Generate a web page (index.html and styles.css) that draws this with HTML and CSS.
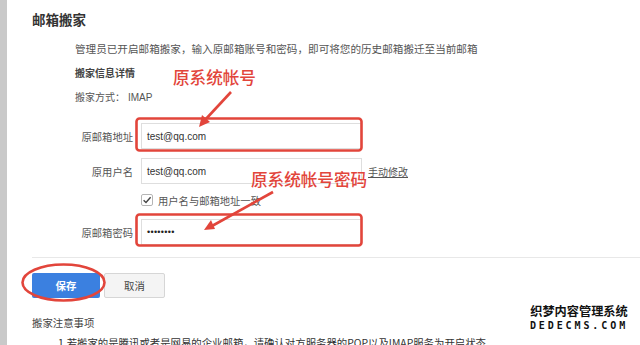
FILE: index.html
```html
<!DOCTYPE html>
<html lang="zh-CN">
<head>
<meta charset="utf-8">
<title>邮箱搬家</title>
<link rel="stylesheet" href="styles.css">
</head>
<body>
<div class="page">
  <div class="rail"></div>
  <main class="main">
    <h2 class="title">邮箱搬家</h2>
    <div class="intro">
      <p class="desc">管理员已开启邮箱搬家，输入原邮箱账号和密码，即可将您的历史邮箱搬迁至当前邮箱</p>
      <p class="sub">搬家信息详情</p>
      <p class="mode">搬家方式：<span class="mode-val">IMAP</span></p>
    </div>
    <form class="form">
      <div class="row row-addr">
        <label class="label">原邮箱地址</label>
        <div class="input">test@qq.com</div>
      </div>
      <div class="row row-user">
        <label class="label">原用户名</label>
        <div class="input">test@qq.com</div>
        <a class="link">手动修改</a>
      </div>
      <div class="row row-check">
        <span class="checkbox"><svg width="12" height="12" viewBox="0 0 12 12"><rect x="0.5" y="0.5" width="11" height="11" rx="1.5" fill="#fff" stroke="#b5b5b5"/><path d="M2.6 6.2 L5 8.5 L9.6 3.2" fill="none" stroke="#444" stroke-width="1.4"/></svg></span>
        <span class="check-text">用户名与邮箱地址一致</span>
      </div>
      <div class="row row-pass">
        <label class="label">原邮箱密码</label>
        <div class="input input-pass">••••••••</div>
      </div>
    </form>
    <div class="divider"></div>
    <div class="actions">
      <button class="btn btn-primary" type="button">保存</button>
      <button class="btn btn-default" type="button">取消</button>
    </div>
    <p class="notes-title">搬家注意事项</p>
    <p class="notes-item">1.若搬家的是腾讯或者是网易的企业邮箱，请确认对方服务器的POP以及IMAP服务为开启状态</p>
  </main>

  <svg class="marks" width="640" height="345" viewBox="0 0 640 345">
    <g fill="none" stroke="#e2453b" stroke-width="2.6">
      <rect x="136.5" y="118.5" width="225" height="32" rx="3"/>
      <rect x="136.5" y="214.5" width="225" height="31" rx="3"/>
      <ellipse cx="63.5" cy="282.5" rx="41" ry="18"/>
      <line x1="231" y1="92" x2="205" y2="120"/>
      <line x1="273" y1="192" x2="212" y2="226"/>
    </g>
    <g fill="#e2453b">
      <polygon points="199,127 202,115 210,122"/>
      <polygon points="204,230 211,220 215,229"/>
    </g>
  </svg>
  <div class="note note-1">原系统帐号</div>
  <div class="note note-2">原系统帐号密码</div>
  <div class="watermark">
    <div class="wm-cn">织梦内容管理系统</div>
    <div class="wm-en">DEDECMS.COM</div>
  </div>
</div>
</body>
</html>
```

FILE: styles.css
```css
html, body {
  margin: 0;
  padding: 0;
  background: #fff;
}
.page {
  position: relative;
  width: 640px;
  height: 345px;
  overflow: hidden;
  display: flex;
  font-family: "Noto Sans CJK SC", "Noto Sans", sans-serif;
  color: #444;
  font-size: 10.4px;
}
.rail {
  width: 7px;
  flex: none;
  background: #c9c9c9;
}
.main {
  flex: 1;
  padding: 10px 0 0 25px;
}
p { margin: 0; }
.title {
  margin: 0;
  font-size: 13.5px;
  line-height: 18px;
  font-weight: 700;
  color: #333;
}
.intro {
  padding-left: 43px;
}
.desc {
  margin-top: 13px;
  line-height: 16px;
  font-size: 10.6px;
  color: #555;
}
.sub {
  margin-top: 8px;
  line-height: 16px;
  font-size: 10px;
  font-weight: 700;
  color: #444;
}
.mode {
  margin-top: 8px;
  line-height: 16px;
  font-size: 10px;
  color: #555;
}
.mode-val {
  margin-left: 3px;
  font-family: "Liberation Sans", sans-serif;
  font-size: 10px;
}
.form {
  margin-top: 17px;
}
.row {
  display: flex;
  align-items: center;
}
.label {
  width: 101px;
  margin-right: 8px;
  text-align: right;
  color: #555;
  font-size: 10.3px;
}
.input {
  width: 221px;
  height: 26px;
  box-sizing: border-box;
  border: 1px solid #dedede;
  padding-left: 5px;
  display: flex;
  align-items: center;
  font-family: "Liberation Sans", sans-serif;
  font-size: 10px;
  color: #333;
}
.input-pass {
  font-size: 9px;
  letter-spacing: 0.3px;
  color: #222;
}
.row-user { margin-top: 9px; }
.row-check {
  margin-top: 8px;
  height: 16px;
  padding-left: 109px;
}
.row-pass { margin-top: 11px; }
.link {
  margin-left: 6px;
  text-decoration: underline;
  color: #555;
  font-size: 10px;
}
.checkbox {
  display: flex;
  width: 12px;
  height: 12px;
}
.check-text {
  margin-left: 5px;
  color: #555;
  font-size: 10.3px;
}
.divider {
  margin-top: 12px;
  height: 1px;
  background: #e8e8e8;
}
.actions {
  margin-top: 15px;
  display: flex;
  gap: 4px;
}
.btn {
  height: 25px;
  border-radius: 2px;
  font-family: "Noto Sans CJK SC", sans-serif;
  font-size: 10.4px;
  padding: 0;
}
.btn-primary {
  width: 68px;
  border: none;
  background: #3b80e0;
  color: #fff;
  font-weight: 700;
}
.btn-default {
  width: 61px;
  border: 1px solid #d6d6d6;
  background: #f4f4f4;
  color: #444;
}
.notes-title {
  margin-top: 17px;
  line-height: 16px;
  font-size: 10.4px;
  color: #444;
}
.notes-item {
  margin-top: 4px;
  padding-left: 26px;
  line-height: 16px;
  font-size: 10.4px;
  color: #333;
}
.marks {
  position: absolute;
  left: 0;
  top: 0;
  pointer-events: none;
}
.note {
  position: absolute;
  color: #e2453b;
  font-size: 16.6px;
  line-height: 20px;
  font-weight: 500;
  white-space: nowrap;
}
.note-1 { left: 173px; top: 67px; }
.note-2 { left: 251px; top: 169px; }
.watermark {
  position: absolute;
  left: 529px;
  top: 303px;
  width: 100px;
  text-align: center;
}
.wm-cn {
  font-size: 12.2px;
  line-height: 16px;
  font-weight: 700;
  color: #111;
  text-shadow: 1px 0 #fff, -1px 0 #fff, 0 1px #fff, 0 -1px #fff;
}
.wm-en {
  font-family: "DejaVu Sans Mono", monospace;
  font-size: 10px;
  line-height: 13px;
  font-weight: 700;
  letter-spacing: 2.9px;
  color: #111;
  text-shadow: 1px 0 #fff, -1px 0 #fff, 0 1px #fff, 0 -1px #fff;
}
```
